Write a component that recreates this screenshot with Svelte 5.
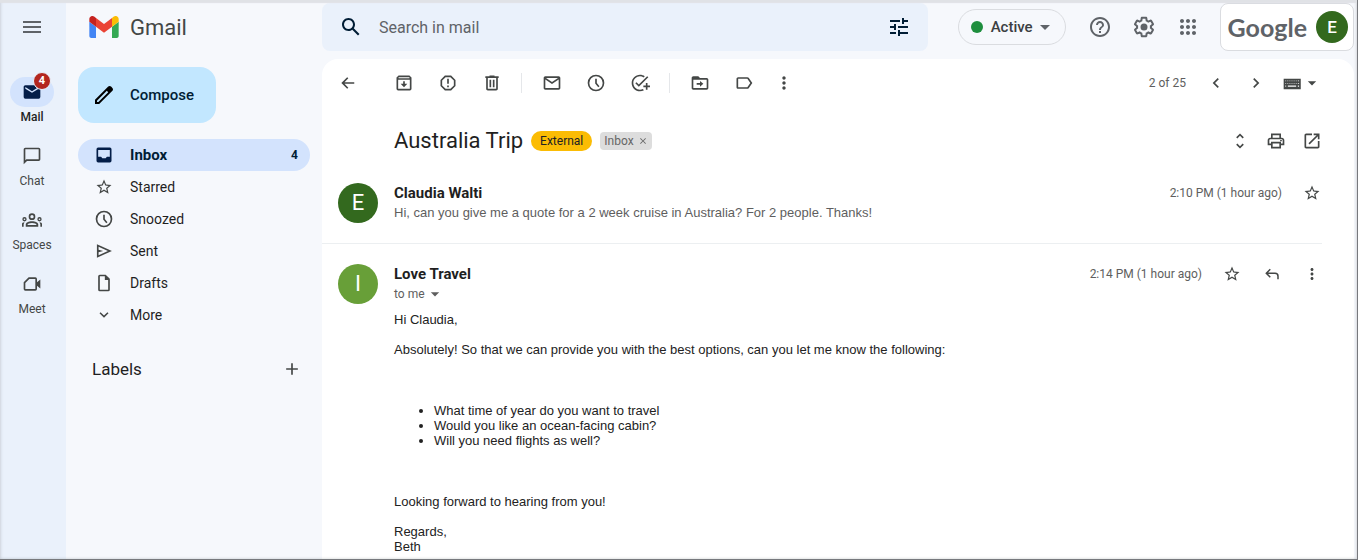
<script>
  const icons = {
    menu: 'M3 18h18v-2H3v2zm0-5h18v-2H3v2zm0-7v2h18V6H3z',
    mailFilled: 'M20 4H4c-1.1 0-2 .9-2 2v12a2 2 0 0 0 2 2h16a2 2 0 0 0 2-2V6a2 2 0 0 0-2-2zm0 4l-8 5-8-5V6l8 5 8-5z',
    chat: 'M4 4h16v12H5.2L4 17.2V4m0-2c-1.1 0-1.99.9-1.99 2L2 22l4-4h14c1.1 0 2-.9 2-2V4c0-1.1-.9-2-2-2H4z',
    spaces: 'M3 8.5a2.6 2.6 0 1 0 0 5.2 2.6 2.6 0 0 0 0-5.2zm0 1.6a1 1 0 1 1 0 2 1 1 0 0 1 0-2zM21 8.5a2.6 2.6 0 1 0 0 5.2 2.6 2.6 0 0 0 0-5.2zm0 1.6a1 1 0 1 1 0 2 1 1 0 0 1 0-2zM0 20v-3c0-1.3.9-2.2 3-2.2L2 17v3zM24 20v-3c0-1.3-.9-2.2-3-2.2l1 2.2v3zM12 4a4 4 0 1 0 0 8 4 4 0 0 0 0-8zm0 2a2 2 0 1 1 0 4 2 2 0 0 1 0-4zM4.5 20v-2.5c0-2.5 3.500-4 7.500-4s7.500 1.500 7.500 4V20zM6.500 18h11c0-1.500-2.500-2.500-5.500-2.500s-5.500 1-5.500 2.500z',
    meet: 'M8 4h8a2 2 0 0 1 2 2v4l4-3.5v11L18 14v4a2 2 0 0 1-2 2H4a2 2 0 0 1-2-2V10zM8.8 6 4 10.8V18h12V6z',
    pencil: 'M20.41 4.94l-1.35-1.35c-.78-.78-2.05-.78-2.83 0L3 16.82V21h4.18L20.41 7.77c.79-.78.79-2.05 0-2.83zm-14 14.12L5 19v-1.36l9.82-9.82 1.41 1.41-9.82 9.83z',
    inbox: 'M19 3H5a2 2 0 0 0-2 2v14a2 2 0 0 0 2 2h14a2 2 0 0 0 2-2V5a2 2 0 0 0-2-2zM5 6h14v8h-3.5l-1.5 2h-4l-1.5-2H5z',
    star: 'M22 9.24l-7.19-.62L12 2 9.19 8.63 2 9.24l5.46 4.73L5.82 21 12 17.27 18.18 21l-1.63-7.03L22 9.24zM12 15.4l-3.76 2.27 1-4.28-3.32-2.88 4.38-.38L12 6.1l1.71 4.04 4.38.38-3.32 2.88 1 4.28L12 15.4z',
    clock: 'M12 2a10 10 0 1 0 0 20 10 10 0 0 0 0-20zm0 2a8 8 0 1 1 0 16 8 8 0 0 1 0-16zM11 7h2v5l3.2 3.8-1.5 1.2L11 12.7z',
    send: 'M3.5 4v16L21.5 12zM5.5 7 16.7 12 5.5 17v-3.5l5.5-1.5-5.5-1.5z',
    draft: 'M14 2H7a2 2 0 0 0-2 2v16a2 2 0 0 0 2 2h10a2 2 0 0 0 2-2V7zM7 4h6v4.5h4V20H7z',
    expand: 'M7.4 8.2 6 9.6l6 6 6-6-1.4-1.4L12 12.8z',
    plus: 'M19 13h-6v6h-2v-6H5v-2h6V5h2v6h6v2z',
    search: 'M20.49 19l-5.73-5.73C15.53 12.2 16 10.91 16 9.5C16 5.91 13.09 3 9.5 3S3 5.91 3 9.5C3 13.09 5.91 16 9.5 16c1.41 0 2.7-.47 3.77-1.24L19 20.49L20.49 19zM5 9.5C5 7.01 7.01 5 9.5 5S14 7.01 14 9.5S11.99 14 9.5 14S5 11.99 5 9.5z',
    tune: 'M3 17v2h6v-2H3zM3 5v2h10V5H3zm10 16v-2h8v-2h-8v-2h-2v6h2zM7 9v2H3v2h4v2h2V9H7zm14 4v-2H11v2h10zm-6-4h2V7h4V5h-4V3h-2v6z',
    help: 'M11 18h2v-2h-2v2zm1-16C6.48 2 2 6.48 2 12s4.48 10 10 10 10-4.48 10-10S17.52 2 12 2zm0 18c-4.41 0-8-3.59-8-8s3.59-8 8-8 8 3.59 8 8-3.59 8-8 8zm0-14c-2.21 0-4 1.79-4 4h2c0-1.1.9-2 2-2s2 .9 2 2c0 2-3 1.75-3 5h2c0-2.25 3-2.5 3-5 0-2.21-1.79-4-4-4z',
    settings: 'M13.85 22.25h-3.7c-.74 0-1.36-.54-1.45-1.27l-.27-1.89c-.27-.14-.53-.29-.79-.46l-1.8.72c-.7.26-1.47-.03-1.81-.65L2.2 15.53c-.35-.66-.2-1.44.36-1.88l1.53-1.19c-.01-.15-.02-.3-.02-.46 0-.15.01-.31.02-.46l-1.52-1.19c-.59-.45-.74-1.26-.37-1.88l1.85-3.19c.34-.62 1.11-.9 1.79-.63l1.81.73c.26-.17.52-.32.78-.46l.27-1.91c.09-.7.71-1.25 1.44-1.25h3.7c.74 0 1.36.54 1.45 1.27l.27 1.89c.27.14.53.29.79.46l1.8-.72c.71-.26 1.48.03 1.82.65l1.84 3.18c.36.66.2 1.44-.36 1.88l-1.52 1.19c.01.15.02.3.02.46s-.01.31-.02.46l1.52 1.19c.56.45.72 1.23.37 1.86l-1.86 3.22c-.34.62-1.11.9-1.8.63l-1.8-.72c-.26.17-.52.32-.78.46l-.27 1.91c-.1.68-.72 1.22-1.46 1.22zm-3.23-2h2.76l.37-2.55.53-.22c.44-.18.88-.44 1.34-.78l.45-.34 2.38.96 1.38-2.4-2.03-1.58.07-.56c.03-.26.06-.51.06-.78s-.03-.53-.06-.78l-.07-.56 2.03-1.58-1.39-2.4-2.39.96-.45-.35c-.42-.32-.87-.58-1.33-.77l-.52-.22-.37-2.55h-2.76l-.37 2.55-.53.21c-.44.19-.88.44-1.34.79l-.45.33-2.38-.95-1.39 2.39 2.03 1.58-.07.56a7 7 0 0 0-.06.79c0 .26.02.53.06.78l.07.56-2.03 1.58 1.38 2.4 2.39-.96.45.35c.43.33.86.58 1.33.77l.53.22.38 2.55zM12 8.5a3.5 3.5 0 1 0 0 7 3.5 3.5 0 0 0 0-7z',
    apps: 'M6 8c1.1 0 2-.9 2-2s-.9-2-2-2-2 .9-2 2 .9 2 2 2zm6 12c1.1 0 2-.9 2-2s-.9-2-2-2-2 .9-2 2 .9 2 2 2zm-6 0c1.1 0 2-.9 2-2s-.9-2-2-2-2 .9-2 2 .9 2 2 2zm0-6c1.1 0 2-.9 2-2s-.9-2-2-2-2 .9-2 2 .9 2 2 2zm6 0c1.1 0 2-.9 2-2s-.9-2-2-2-2 .9-2 2 .9 2 2 2zm4-8c0 1.1.9 2 2 2s2-.9 2-2-.9-2-2-2-2 .9-2 2zm-4 2c1.1 0 2-.9 2-2s-.9-2-2-2-2 .9-2 2 .9 2 2 2zm6 6c1.1 0 2-.9 2-2s-.9-2-2-2-2 .9-2 2 .9 2 2 2zm0 6c1.1 0 2-.9 2-2s-.9-2-2-2-2 .9-2 2 .9 2 2 2z',
    back: 'M19.5 11H7.8l4.6-4.6L11 5 4 12l7 7 1.4-1.4L7.8 13h11.7z',
    archive: 'M5.5 3h13L21 5.5V19a2 2 0 0 1-2 2H5a2 2 0 0 1-2-2V5.5zM5.500 5.200v1h13v-1zM5 8v11h14V8zM11 10h2v3h3l-4 4-4-4h3z',
    spam: 'M15.73 3H8.27L3 8.27v7.46L8.27 21h7.46L21 15.73V8.27L15.73 3zM19 14.9L14.9 19H9.1L5 14.9V9.1L9.1 5h5.8L19 9.1v5.8zM11 7h2v6h-2zM11 15h2v2h-2z',
    trash: 'M15 4V3H9v1H4v2h1v13c0 1.1.9 2 2 2h10c1.1 0 2-.9 2-2V6h1V4h-5zm2 15H7V6h10v13zM9 8h2v9H9zm4 0h2v9h-2z',
    mail: 'M20 4H4c-1.1 0-2 .9-2 2v12c0 1.1.9 2 2 2h16c1.1 0 2-.9 2-2V6c0-1.1-.9-2-2-2zm-.8 2L12 10.8 4.8 6h14.4zM4 18V7.87l8 5.33 8-5.33V18H4z',
    task: 'M22 5.18 10.59 16.6l-4.24-4.24 1.41-1.41 2.83 2.83 10-10L22 5.18zM12 20c-4.41 0-8-3.59-8-8s3.59-8 8-8c1.57 0 3.04.46 4.28 1.25l1.45-1.45C16.1 2.67 14.13 2 12 2 6.48 2 2 6.48 2 12s4.48 10 10 10c1.73 0 3.36-.44 4.78-1.22l-1.5-1.5c-1 .46-2.11.72-3.28.72zm7-5h-3v2h3v3h2v-3h3v-2h-3v-3h-2v3z',
    move: 'M20 6h-8l-2-2H4c-1.1 0-2 .9-2 2v12c0 1.1.9 2 2 2h16c1.1 0 2-.9 2-2V8c0-1.1-.9-2-2-2zM4 18V8h16v10H4zM12 9.5l4 3.500-4 3.500V14H8v-2h4z',
    label: 'M17.63 5.84C17.27 5.33 16.67 5 16 5L5 5.01C3.9 5.01 3 5.9 3 7v10c0 1.1.9 1.99 2 1.99L16 19c.67 0 1.27-.33 1.63-.84L22 12l-4.37-6.16zM16 17H5V7h11l3.55 5L16 17z',
    more: 'M12 8c1.1 0 2-.9 2-2s-.9-2-2-2-2 .9-2 2 .9 2 2 2zm0 2c-1.1 0-2 .9-2 2s.9 2 2 2 2-.9 2-2-.9-2-2-2zm0 6c-1.1 0-2 .9-2 2s.9 2 2 2 2-.9 2-2-.9-2-2-2z',
    prev: 'M15.41 7.41L14 6l-6 6 6 6 1.41-1.41L10.83 12z',
    next: 'M10 6L8.59 7.41 13.17 12l-4.58 4.59L10 18l6-6z',
    keyboard: 'M2 7h20.500v12.500H2zM4 9v1h1V9zM6.500 9v1h1V9zM9 9v1h1V9zM11.500 9v1h1V9zM14 9v1h1V9zM16.500 9v1h1V9zM19 9v1h1.500V9zM4 12v1h1v-1zM6.500 12v1h1v-1zM9 12v1h1v-1zM11.500 12v1h1v-1zM14 12v1h1v-1zM16.500 12v1h1v-1zM19 12v1h1.500v-1zM4 15v1.500h1V15zM7 15v1.500h10V15zM19 15v1.500h1.500V15z',
    caret: 'M7 10l5 5 5-5z',
    unfold: 'M12 5.83L15.17 9l1.41-1.41L12 3 7.41 7.59 8.83 9 12 5.83zm0 12.34L8.83 15l-1.41 1.41L12 21l4.59-4.59L15.17 15 12 18.17z',
    print: 'M19 8h-1V3H6v5H5c-1.66 0-3 1.34-3 3v6h4v4h12v-4h4v-6c0-1.66-1.34-3-3-3zM8 5h8v3H8V5zm8 12v2H8v-4h8v2zm2-2v-2H6v2H4v-4c0-.55.45-1 1-1h14c.55 0 1 .45 1 1v4h-2zM17 10.8h2v1.5h-2z',
    popout: 'M19 19H5V5h7V3H5c-1.11 0-2 .9-2 2v14c0 1.1.89 2 2 2h14c1.1 0 2-.9 2-2v-7h-2v7zM14 3v2h3.59l-9.83 9.83 1.41 1.41L19 6.41V10h2V3h-7z',
    reply: 'M19 19v-4a3 3 0 0 0-3-3H6.83l3.58 3.59L9 17l-6-6 6-6 1.41 1.41L6.83 10H16a5 5 0 0 1 5 5v4z',
    close: 'M19 6.41L17.59 5 12 10.59 6.41 5 5 6.41 10.59 12 5 17.59 6.41 19 12 13.41 17.59 19 19 17.59 13.41 12z'
  };

  const railItems = [
    { name: 'Mail', icon: 'mailFilled', count: 4 },
    { name: 'Chat', icon: 'chat' },
    { name: 'Spaces', icon: 'spaces' },
    { name: 'Meet', icon: 'meet' }
  ];

  const folders = [
    { name: 'Inbox', icon: 'inbox', count: 4 },
    { name: 'Starred', icon: 'star', size: 18 },
    { name: 'Snoozed', icon: 'clock' },
    { name: 'Sent', icon: 'send' },
    { name: 'Drafts', icon: 'draft' },
    { name: 'More', icon: 'expand', size: 18 }
  ];

  const toolGroups = [
    [['archive', 'Archive'], ['spam', 'Report spam'], ['trash', 'Delete']],
    [['mail', 'Mark as unread'], ['clock', 'Snooze'], ['task', 'Add to Tasks']],
    [['move', 'Move to'], ['label', 'Labels']]
  ];

  const questions = [
    'What time of year do you want to travel',
    'Would you like an ocean-facing cabin?',
    'Will you need flights as well?'
  ];

  let currentRail = $state('Mail');
  let currentFolder = $state('Inbox');
  let query = $state('');
</script>

{#snippet icon(name, size = 20)}
  <svg width={size} height={size} viewBox="0 0 24 24" fill="currentColor" fill-rule="evenodd" aria-hidden="true">
    <path d={icons[name]} />
  </svg>
{/snippet}

{#snippet iconButton(name, label, size = 20)}
  <button class="icon-btn" aria-label={label}>{@render icon(name, size)}</button>
{/snippet}

<div class="window">
  <nav class="rail" aria-label="Apps">
    <button class="rail-menu" aria-label="Main menu">{@render icon('menu', 24)}</button>
    {#each railItems as item}
      <button class="rail-item" class:active={currentRail === item.name} onclick={() => (currentRail = item.name)}>
        <span class="pill">
          {@render icon(item.icon)}
          {#if item.count}<span class="badge">{item.count}</span>{/if}
        </span>
        <span class="rail-label">{item.name}</span>
      </button>
    {/each}
  </nav>

  <div class="app">
    <header>
      <a class="logo" href="#inbox">
        <svg width="30" height="22" viewBox="52 42 88 66" aria-hidden="true">
          <path fill="#4285f4" d="M58 108h14V74L52 59v43c0 3.32 2.69 6 6 6" />
          <path fill="#34a853" d="M120 108h14c3.32 0 6-2.69 6-6V59l-20 15" />
          <path fill="#fbbc04" d="M120 48v26l20-15v-8c0-7.42-8.47-11.65-14.4-7.2" />
          <path fill="#ea4335" d="M72 74V48l24 18 24-18v26L96 92" />
          <path fill="#c5221f" d="M52 51v8l20 15V48l-5.6-4.2c-5.94-4.45-14.4-.22-14.4 7.2" />
        </svg>
        <span>Gmail</span>
      </a>

      <form class="search" role="search">
        <button class="icon-btn" type="button" aria-label="Search">{@render icon('search', 24)}</button>
        <input type="text" aria-label="Search in mail" placeholder="Search in mail" bind:value={query} />
        <button class="icon-btn" type="button" aria-label="Show search options">{@render icon('tune', 24)}</button>
      </form>

      <button class="status">
        <span class="dot"></span>
        <span>Active</span>
        {@render icon('caret', 24)}
      </button>

      <div class="header-icons">
        {@render iconButton('help', 'Support', 24)}
        {@render iconButton('settings', 'Settings', 24)}
        {@render iconButton('apps', 'Google apps', 24)}
      </div>

      <a class="account" href="#account">
        <span class="brand">Google</span>
        <span class="avatar small">E</span>
      </a>
    </header>

    <div class="columns">
      <aside>
        <button class="compose">{@render icon('pencil', 24)}<span>Compose</span></button>
        <ul class="folders">
          {#each folders as folder}
            <li>
              <a
                href="#{folder.name.toLowerCase()}"
                class:active={currentFolder === folder.name}
                onclick={() => (currentFolder = folder.name)}
              >
                <span class="folder-icon">{@render icon(folder.icon, folder.size)}</span>
                <span class="folder-name">{folder.name}</span>
                {#if folder.count}<span class="count">{folder.count}</span>{/if}
              </a>
            </li>
          {/each}
        </ul>
        <div class="labels">
          <h2>Labels</h2>
          {@render iconButton('plus', 'Create new label')}
        </div>
      </aside>

      <main>
        <div class="toolbar">
          <div class="tools">
            {@render iconButton('back', 'Back to Inbox')}
          </div>
          {#each toolGroups as group}
            <div class="tools group">
              {#each group as [name, label]}
                {@render iconButton(name, label)}
              {/each}
            </div>
          {/each}
          {@render iconButton('more', 'More')}
          <div class="pager">
            <span>2 of 25</span>
            {@render iconButton('prev', 'Newer')}
            {@render iconButton('next', 'Older')}
            <button class="input-tools" aria-label="Input tools">{@render icon('keyboard')}{@render icon('caret')}</button>
          </div>
        </div>

        <div class="subject">
          <h1>Australia Trip</h1>
          <span class="tag external">External</span>
          <span class="tag folder">Inbox <button aria-label="Remove label Inbox">{@render icon('close', 10)}</button></span>
          <div class="subject-actions">
            {@render iconButton('unfold', 'Expand all')}
            {@render iconButton('print', 'Print all')}
            {@render iconButton('popout', 'In new window')}
          </div>
        </div>

        <article class="collapsed">
          <span class="avatar">E</span>
          <div class="content">
            <div class="meta">
              <h3>Claudia Walti</h3>
              <time>2:10 PM (1 hour ago)</time>
              {@render iconButton('star', 'Star', 18)}
            </div>
            <p class="snippet">Hi, can you give me a quote for a 2 week cruise in Australia? For 2 people. Thanks!</p>
          </div>
        </article>

        <article>
          <span class="avatar light">I</span>
          <div class="content">
            <div class="meta">
              <h3>Love Travel</h3>
              <time>2:14 PM (1 hour ago)</time>
              {@render iconButton('star', 'Star', 18)}
              {@render iconButton('reply', 'Reply', 18)}
              {@render iconButton('more', 'More', 18)}
            </div>
            <button class="recipient">to me {@render icon('caret')}</button>
            <div class="message">
              <p>Hi Claudia,</p>
              <p>Absolutely! So that we can provide you with the best options, can you let me know the following:</p>
              <ul>
                {#each questions as question}
                  <li>{question}</li>
                {/each}
              </ul>
              <p>Looking forward to hearing from you!</p>
              <p>Regards,<br />Beth</p>
            </div>
          </div>
        </article>
      </main>
    </div>
  </div>
</div>

<style>
  :global(body) {
    margin: 0;
    background: #ffffff;
  }

  .window {
    position: relative;
    box-sizing: border-box;
    display: flex;
    min-height: 100vh;
    margin-right: 1px;
    padding: 3px 3px 0 0;
    border-right: 1px solid #77797d;
    border-bottom: 1px solid #77797d;
    background: #f6f8fc;
    color: #1f1f1f;
    font-family: Roboto, 'Liberation Sans', sans-serif;
    font-size: 14px;
  }

  /* soft shade along the window edges */
  .window::after {
    content: '';
    position: absolute;
    inset: 0;
    box-shadow: inset 0 3px 1px #e0e2e6, inset 1px 0 3px rgba(60, 64, 67, 0.14), inset -1px 0 3px rgba(60, 64, 67, 0.14);
    pointer-events: none;
  }

  button {
    padding: 0;
    border: none;
    background: none;
    color: inherit;
    font: inherit;
    cursor: pointer;
  }

  a {
    color: inherit;
    text-decoration: none;
  }

  h1, h2, h3, p, ul {
    margin: 0;
    padding: 0;
  }

  svg {
    display: block;
    flex-shrink: 0;
  }

  .icon-btn {
    display: grid;
    place-items: center;
    min-width: 20px;
    color: #444746;
  }

  /* Left rail */
  .rail {
    flex: 0 0 66px;
    display: flex;
    flex-direction: column;
    align-items: center;
    gap: 14px;
    margin-top: -3px;
    padding: 3px 2px 0 0;
    box-sizing: border-box;
    background: #eaf1fb;
  }

  .rail-menu {
    display: grid;
    place-items: center;
    height: 48px;
    margin-bottom: 12px;
    color: #5f6368;
  }

  .rail-item {
    display: flex;
    flex-direction: column;
    align-items: center;
    color: #444746;
    font-size: 12px;
  }

  .rail-item.active {
    color: #1f1f1f;
    font-weight: 500;
  }

  .pill {
    position: relative;
    display: grid;
    place-items: center;
    width: 44px;
    height: 30px;
    border-radius: 15px;
  }

  .active .pill {
    background: #d3e3fd;
    color: #041e49;
  }

  .badge {
    position: absolute;
    top: -5px;
    right: 3px;
    width: 16px;
    border: 1px solid #eaf1fb;
    border-radius: 50%;
    background: #b3261e;
    color: #ffffff;
    font-size: 11px;
    font-weight: 700;
    line-height: 16px;
    text-align: center;
  }

  .rail-label {
    line-height: 20px;
  }

  /* Header */
  .app {
    flex: 1;
    min-width: 0;
    display: flex;
    flex-direction: column;
  }

  header {
    display: flex;
    align-items: center;
    height: 48px;
    margin-bottom: 8px;
  }

  .logo {
    flex: 0 0 256px;
    box-sizing: border-box;
    display: flex;
    align-items: center;
    gap: 11px;
    padding-left: 23px;
    color: #444746;
    font-size: 22px;
  }

  .search {
    flex: 1;
    display: flex;
    align-items: center;
    gap: 16px;
    height: 48px;
    padding: 0 17px;
    border-radius: 8px;
    background: #eaf1fb;
  }

  .search .icon-btn {
    color: #001d35;
  }

  .search input {
    flex: 1;
    min-width: 0;
    padding: 0;
    border: none;
    outline: none;
    background: none;
    color: #1f1f1f;
    font: inherit;
    font-size: 16px;
  }

  .search input::placeholder {
    color: #5f6368;
    opacity: 1;
  }

  .status {
    display: flex;
    align-items: center;
    height: 36px;
    margin-left: 30px;
    padding: 0 8px 0 12px;
    border: 1px solid #dadce0;
    border-radius: 18px;
    color: #3c4043;
    font-size: 15px;
    font-weight: 500;
  }

  .dot {
    width: 12px;
    height: 12px;
    margin-right: 8px;
    border-radius: 50%;
    background: #1e8e3e;
  }

  .status svg {
    color: #5f6368;
  }

  .header-icons {
    display: flex;
    gap: 20px;
    margin: 0 20px 0 22px;
  }

  .header-icons .icon-btn {
    color: #5f6368;
  }

  .account {
    display: flex;
    align-items: center;
    gap: 9px;
    box-sizing: border-box;
    height: 48px;
    padding: 0 5px 0 7px;
    border: 1px solid #dadce0;
    border-radius: 8px;
    background: #ffffff;
  }

  .brand {
    color: #5f6368;
    font-family: Lato, sans-serif;
    font-size: 25px;
    font-weight: 700;
  }

  .avatar {
    flex: 0 0 40px;
    height: 40px;
    border-radius: 50%;
    background: #33691e;
    color: #ffffff;
    font-size: 22px;
    line-height: 40px;
    text-align: center;
  }

  .avatar.light {
    background: #689f38;
  }

  .avatar.small {
    flex-basis: 32px;
    height: 32px;
    font-size: 17px;
    font-weight: 500;
    line-height: 32px;
  }

  /* Sidebar */
  .columns {
    flex: 1;
    display: flex;
  }

  aside {
    flex: 0 0 256px;
    box-sizing: border-box;
    padding: 8px 12px 0;
  }

  .compose {
    display: flex;
    align-items: center;
    gap: 14px;
    height: 56px;
    margin-bottom: 16px;
    padding: 0 22px 0 14px;
    border-radius: 16px;
    background: #c2e7ff;
    color: #001d35;
    font-size: 15px;
    font-weight: 500;
  }

  .compose svg {
    color: #000000;
  }

  .folders {
    list-style: none;
  }

  .folders a {
    display: flex;
    align-items: center;
    height: 32px;
    padding: 0 12px 0 16px;
    border-radius: 16px;
  }

  .folders a.active {
    background: #d3e3fd;
    color: #001d35;
    font-size: 15px;
    font-weight: 700;
  }

  .folder-icon {
    display: grid;
    place-items: center;
    width: 20px;
    height: 20px;
    margin-right: 16px;
    color: #444746;
  }

  .active .folder-icon {
    color: #041e49;
  }

  .folder-name {
    flex: 1;
  }

  .count {
    font-size: 12px;
  }

  .labels {
    display: flex;
    align-items: center;
    justify-content: space-between;
    height: 40px;
    margin-top: 18px;
    padding: 0 8px 0 14px;
  }

  .labels h2 {
    font-size: 17px;
    font-weight: 400;
  }

  /* Open conversation */
  main {
    flex: 1;
    min-width: 0;
    box-sizing: border-box;
    padding-right: 32px;
    border-radius: 16px 16px 0 0;
    background: #ffffff;
  }

  .toolbar {
    display: flex;
    align-items: center;
    height: 48px;
    padding-left: 16px;
  }

  .tools {
    display: flex;
    gap: 24px;
    padding-right: 16px;
  }

  .group {
    padding: 0 19px 0 20px;
  }

  .group + .group {
    border-left: 1px solid #e5e7ea;
  }

  .group:nth-child(4) {
    padding-right: 20px;
  }

  .pager {
    display: flex;
    align-items: center;
    gap: 20px;
    margin-left: auto;
    color: #5e5e5e;
    font-size: 12px;
  }

  .input-tools {
    display: flex;
    align-items: center;
    margin-left: -4px;
    color: #444746;
  }

  .subject {
    display: flex;
    align-items: center;
    height: 68px;
    padding-left: 72px;
  }

  h1 {
    margin-right: 8px;
    font-size: 22px;
    font-weight: 400;
    line-height: 28px;
  }

  .tag {
    display: flex;
    align-items: center;
    font-size: 12px;
  }

  .external {
    height: 20px;
    margin-right: 8px;
    padding: 0 9px;
    border-radius: 10px;
    background: #fbbc04;
    color: #202124;
  }

  .folder {
    gap: 4px;
    height: 18px;
    padding: 0 4px;
    border-radius: 4px;
    background: #dddddd;
    color: #666666;
  }

  .subject-actions {
    display: flex;
    gap: 16px;
    margin-left: auto;
  }

  article {
    display: flex;
    gap: 16px;
    padding: 20px 0 0 16px;
  }

  article.collapsed {
    padding: 8px 0 20px 16px;
    border-bottom: 1px solid #eceff1;
  }

  .content {
    flex: 1;
    min-width: 0;
  }

  .meta {
    display: flex;
    align-items: center;
    gap: 20px;
    height: 20px;
  }

  .meta h3 {
    flex: 1;
    font-size: 15px;
    font-weight: 700;
  }

  time {
    color: #5e5e5e;
    font-size: 12px;
  }

  .snippet {
    color: #5e5e5e;
    font-family: 'Liberation Sans', Arial, sans-serif;
    font-size: 13px;
    line-height: 20px;
  }

  .recipient {
    display: flex;
    align-items: center;
    height: 20px;
    color: #5e5e5e;
    font-size: 12px;
  }

  .message {
    margin-top: 8px;
    color: #222222;
    font-family: 'Liberation Sans', Arial, sans-serif;
    font-size: 13px;
    line-height: 15px;
  }

  .message p + p {
    margin-top: 15px;
  }

  .message ul {
    margin: 46px 0;
    padding-left: 40px;
  }
</style>
